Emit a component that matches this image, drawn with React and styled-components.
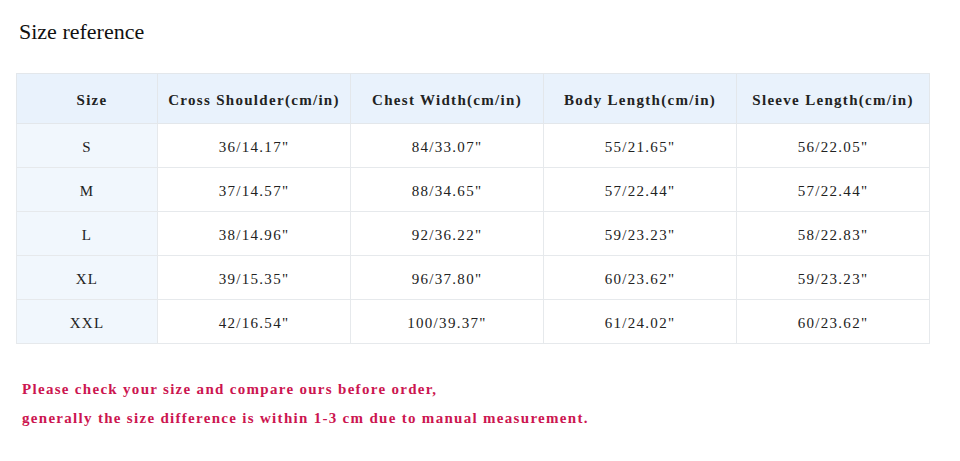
import React from "react"
import styled, { createGlobalStyle } from "styled-components"

const GlobalStyle = createGlobalStyle`
  body {
    margin: 0;
    background: #fff;
    font-family: "Liberation Serif", "Times New Roman", serif;
  }
`

const Page = styled.div`
  width: 960px;
  height: 461px;
  padding: 20px 0 0 16px;
  box-sizing: border-box;
`

const Title = styled.h2`
  margin: 0 0 0 3px;
  font-size: 22px;
  font-weight: normal;
  line-height: 24px;
  color: #111;
`

const Table = styled.table`
  margin-top: 29px;
  border-collapse: collapse;
  table-layout: fixed;
  width: 913px;
  border: 1px solid #e3e7eb;
`

const Col = styled.col`
  width: ${(p) => (p.$first ? "141px" : "193px")};
`

const HeadCell = styled.th`
  height: 50px;
  padding: 4px 0 0 ${(p) => (p.$first ? "10px" : "0")};
  box-sizing: border-box;
  background: #e9f2fc;
  border: 1px solid #e3e7eb;
  font-size: 15px;
  font-weight: bold;
  letter-spacing: 1.3px;
  color: #222;
  text-align: center;
`

const Cell = styled.td`
  height: 44px;
  padding: 4px 0 0;
  box-sizing: border-box;
  background: ${(p) => (p.$side ? "#f1f7fd" : "#fff")};
  border: 1px solid #e6e9ec;
  font-size: 15px;
  letter-spacing: 1.3px;
  color: #222;
  text-align: center;
`

const Notes = styled.div`
  margin: 31px 0 0 6px;
`

const Note = styled.p`
  margin: 0;
  font-size: 15px;
  font-weight: bold;
  line-height: 29px;
  letter-spacing: 1.3px;
  color: #cc1550;
`

const headers = [
  "Size",
  "Cross Shoulder(cm/in)",
  "Chest Width(cm/in)",
  "Body Length(cm/in)",
  "Sleeve Length(cm/in)",
]

const rows = [
  ["S", '36/14.17"', '84/33.07"', '55/21.65"', '56/22.05"'],
  ["M", '37/14.57"', '88/34.65"', '57/22.44"', '57/22.44"'],
  ["L", '38/14.96"', '92/36.22"', '59/23.23"', '58/22.83"'],
  ["XL", '39/15.35"', '96/37.80"', '60/23.62"', '59/23.23"'],
  ["XXL", '42/16.54"', '100/39.37"', '61/24.02"', '60/23.62"'],
]

const App = () => (
  <Page>
    <GlobalStyle />
    <Title>Size reference</Title>
    <Table>
      <colgroup>
        {headers.map((h, i) => (
          <Col key={h} $first={i === 0} />
        ))}
      </colgroup>
      <thead>
        <tr>
          {headers.map((h, i) => (
            <HeadCell key={h} $first={i === 0}>
              {h}
            </HeadCell>
          ))}
        </tr>
      </thead>
      <tbody>
        {rows.map((row) => (
          <tr key={row[0]}>
            {row.map((v, i) => (
              <Cell key={i} $side={i === 0}>
                {v}
              </Cell>
            ))}
          </tr>
        ))}
      </tbody>
    </Table>
    <Notes>
      <Note>Please check your size and compare ours before order,</Note>
      <Note>generally the size difference is within 1-3 cm due to manual measurement.</Note>
    </Notes>
  </Page>
)

export default App
